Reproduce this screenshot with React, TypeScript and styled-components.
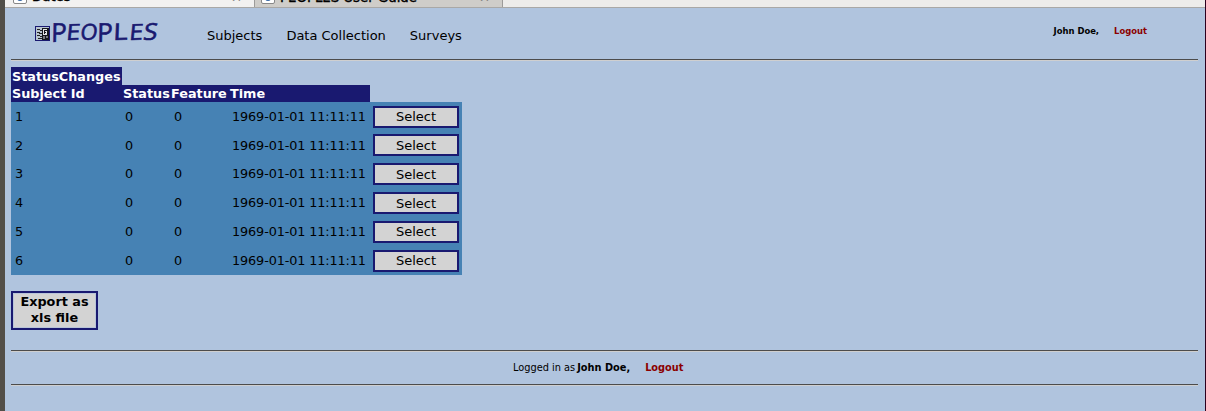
import React from "react";
import styled, { createGlobalStyle } from "styled-components";

const Global = createGlobalStyle`
  * { box-sizing: border-box; }
  body { margin: 0; background: #b0c4de; overflow: hidden; font-family: "DejaVu Sans", sans-serif; color: #000; }
`;
const Shell = styled.div`
  height: 411px; border-left: 5px solid #524f49; border-right: 1px solid #2c001e;
`;
const TabStrip = styled.div`
  display: flex; height: 8px; overflow: hidden; background: #edecea; border-bottom: 1px solid #a9a8a6;
`;
const Tab = styled.div<{ $active?: boolean }>`
  display: flex; align-items: flex-end; flex: none;
  width: ${p => (p.$active ? 250 : 248)}px; height: 7px; padding-bottom: ${p => (p.$active ? 2 : 1)}px;
  padding-left: ${p => (p.$active ? 8 : 6)}px; padding-right: 12px;
  background: ${p => (p.$active ? "#f2f1f0" : "#cfcdc9")};
  border-right: 1px solid #9c9b99;
`;
const TabIcon = styled.span<{ $active?: boolean }>`
  flex: none; width: 14px; height: 24px; margin-bottom: ${p => (p.$active ? 1 : 2)}px; border: 1px solid #888; border-radius: 2px; background: #fff;
  display: flex; justify-content: center; align-items: flex-end;
  &::after { content: ""; width: 6px; height: 3px; border-radius: 0 0 4px 4px; background: #3465a4; margin-bottom: 2px; }
`;
const TabLabel = styled.span`
  flex: 1; margin-left: 5px; font-size: 13.3px; line-height: 16px; white-space: nowrap; -webkit-text-stroke: 0.4px #000;
`;
const TabClose = styled.span<{ $active?: boolean }>`
  font-size: 13px; line-height: 16px; color: #777; margin-bottom: ${p => (p.$active ? -1 : 0)}px;
`;
const Page = styled.div`
  padding: 0 7px 0 6px;
`;
const Header = styled.header`
  display: flex; height: 51px; padding-left: 24px;
`;
const Logo = styled.div`
  display: flex; width: 172px; padding-top: 8px;
  svg { margin-top: 10px; flex: none; }
`;
const Wordmark = styled.span`
  display: flex; margin-left: 1px;
  font-family: "Open Sans", sans-serif; font-weight: 400; line-height: 30px;
  color: #191970; -webkit-text-stroke: 0.6px #191970;
`;
const Letter = styled.span<{ $w: number; $size: number; $tilt: number; $drop?: number; $stretch?: number }>`
  display: block; width: ${p => p.$w}px; font-size: ${p => p.$size}px;
  margin-top: ${p => p.$drop ?? 0}px; transform-origin: 0 50%;
  transform: scaleX(${p => p.$stretch ?? 1}) skewX(${p => p.$tilt}deg) rotate(-2deg);
`;
const Nav = styled.nav`
  display: flex; gap: 24px; padding-top: 20px; font-size: 13px; line-height: 16px; white-space: nowrap;
`;
const Session = styled.div<{ $footer?: boolean }>`
  display: flex; font-family: "DejaVu Sans Condensed", "DejaVu Sans", sans-serif; white-space: nowrap;
  font-size: ${p => (p.$footer ? 10.88 : 9.35)}px; line-height: 14px;
  margin: ${p => (p.$footer ? "9px 0 0 502px" : "16px 51px 0 auto")};
`;
const Intro = styled.span`
  margin-right: -1px;
`;
const User = styled.b`
  margin-right: 15px;
`;
const Logout = styled.b`
  color: #8b0000;
`;
const Rule = styled.hr`
  height: 2px; margin: 0; border: 0; border-top: 1px solid #4c4c4c; border-bottom: 1px solid #cfcfcf;
`;
const Table = styled.table`
  margin-top: 6px; border-collapse: collapse; table-layout: fixed; width: 451px; font-size: 12.8px;
  th { background: #191970; color: #fff; text-align: left; padding: 0 1px; height: 17px; line-height: 17px; white-space: nowrap; }
  tr:first-child th { height: 18px; }
`;
const Row = styled.tr`
  height: 28.8px; background: #4682b4;
  td { padding: 0 3px; white-space: nowrap; }
  td:first-child, td:nth-child(3) { padding-left: 4px; }
  td:nth-child(4) { letter-spacing: -0.11px; }
`;
const Select = styled.button`
  display: block; width: 86px; height: 22px; margin-top: 0.6px; padding: 0; border: 2px solid #191970; background: #d3d3d3;
  font: 13px "DejaVu Sans", sans-serif; color: #000;
`;
const Export = styled.button`
  display: block; width: 87px; height: 39px; margin-top: 16px; padding: 0; border: 2px solid #191970;
  background: #d3d3d3; box-shadow: inset 0 0 0 1px #b9c5d8;
  font: bold 12.8px/16px "DejaVu Sans", sans-serif; color: #000;
`;
const Footer = styled.footer`
  margin-top: 20px;
  height: 36px;
`;
const FooterBody = styled.div`
  height: 32px; display: flex;
`;

const LogoMark = () => (
  <svg width="15" height="15" viewBox="0 0 15 15" shapeRendering="crispEdges">
    <rect x=".5" y=".5" width="14" height="14" fill="#b8c4cf" stroke="#191970" />
    <path d="M2 3.5h3M5 4.5h2M2 6.5h3M4 7.5h3M2 9.5h3M5 10.5h2M3 12.5h4" stroke="#222" fill="none" />
    <path d="M7 2h7v12H7z" fill="#16181c" />
    <path d="M8 3h4v6H8z" fill="#e5e5e5" />
    <path d="M8 10h2v3H8zM11 10h2v2h-2z" fill="#77797c" />
    <path d="M9 4h1v4H9zM10 4h2v1h-2zM10 6h1v1h-1z" fill="#16181c" />
  </svg>
);

export default function App() {
  return (
    <>
      <Global />
      <Shell>
        <TabStrip>
          <Tab $active><TabIcon $active /><TabLabel>Dates</TabLabel><TabClose $active>✕</TabClose></Tab>
          <Tab><TabIcon /><TabLabel>PEOPLES User Guide</TabLabel><TabClose>✕</TabClose></Tab>
        </TabStrip>
        <Page>
          <Header>
            <Logo>
              <LogoMark />
              <Wordmark>
                <Letter $w={15} $size={26} $tilt={-3} $drop={1}>P</Letter>
                <Letter $w={14} $size={22} $tilt={-7} $stretch={1.12}>E</Letter>
                <Letter $w={17} $size={22} $tilt={-8}>O</Letter>
                <Letter $w={16} $size={26} $tilt={-3} $drop={1}>P</Letter>
                <Letter $w={16} $size={23} $tilt={-4} $stretch={1.2}>L</Letter>
                <Letter $w={14} $size={22} $tilt={-7} $stretch={1.12}>E</Letter>
                <Letter $w={13} $size={23} $tilt={-10} $stretch={1.1}>S</Letter>
              </Wordmark>
            </Logo>
            <Nav><span>Subjects</span><span>Data Collection</span><span>Surveys</span></Nav>
            <Session><User>John Doe,</User><Logout>Logout</Logout></Session>
          </Header>
          <Rule />
          <Table>
            <colgroup>
              <col style={{ width: 111 }} /><col style={{ width: 48 }} /><col style={{ width: 59 }} />
              <col style={{ width: 141 }} /><col style={{ width: 92 }} />
            </colgroup>
            <thead>
              <tr><th>StatusChanges</th></tr>
              <tr><th>Subject Id</th><th>Status</th><th>Feature</th><th>Time</th></tr>
            </thead>
            <tbody>
              {[1, 2, 3, 4, 5, 6].map(id => (
                <Row key={id}>
                  <td>{id}</td><td>0</td><td>0</td><td>1969-01-01 11:11:11</td><td><Select>Select</Select></td>
                </Row>
              ))}
            </tbody>
          </Table>
          <Export>Export as<br />xls file</Export>
          <Footer>
            <Rule />
            <FooterBody>
              <Session $footer><Intro>Logged in as&nbsp;</Intro><User>John Doe,</User><Logout>Logout</Logout></Session>
            </FooterBody>
            <Rule />
          </Footer>
        </Page>
      </Shell>
    </>
  );
}
